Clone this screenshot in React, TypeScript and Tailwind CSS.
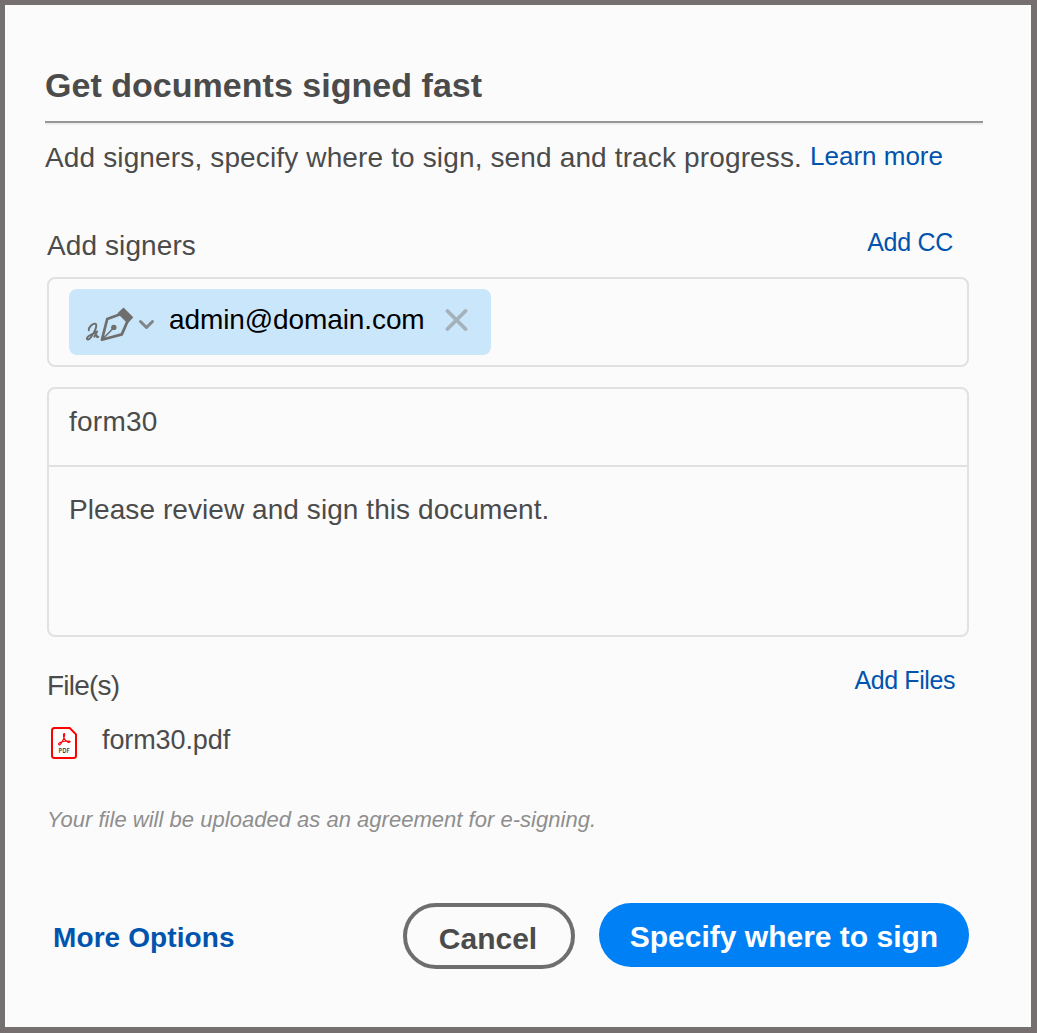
function PenIcon() {
  return (
    <svg className="ml-4 mt-1 h-9 w-12 shrink-0" viewBox="85 306 48 36" fill="none" stroke="#6e6e6e" strokeLinecap="round" strokeLinejoin="round">
      <path d="M123.5 307.6 133.4 317.4 127.6 323.6 117.4 313.2Z" fill="#6e6e6e" stroke="none" />
      <path d="M119.6 314.4 107.2 319 101.9 339.8 121.8 334.4 127 322.4" strokeWidth="2.7" />
      <path d="M102.5 339.2 113 328.4" strokeWidth="1.5" />
      <circle cx="113.8" cy="327.4" r="2.7" fill="#6e6e6e" stroke="none" />
      <path d="M88.8 330.2C88.2 327.4 92.6 323.4 95.2 323.6C98 324.4 95 331.6 91.2 337C89.2 339.8 86.6 340.4 86.9 338.2C87.4 335.8 92 334.6 97.2 331.4L94.4 336.8C95.8 334.8 97.4 334.6 96.8 336.2C96.6 337.4 97.4 337.4 98.4 336.8" strokeWidth="1.9" />
    </svg>
  );
}

function PdfIcon() {
  return (
    <svg className="h-8 w-[27px] shrink-0" viewBox="0 0 27 32" fill="none">
      <path d="M3.5 1H18.7L25 7.3V28.5Q25 31 22.5 31H3.5Q1 31 1 28.5V3.5Q1 1 3.5 1Z" fill="#fff" stroke="#f00" strokeWidth="2" />
      <path d="M7.6 17.2C6.7 15.8 12.3 14 17.8 14C20.4 14.3 18.5 16 16.5 14.9C13.5 13 12.2 10.2 12.5 7.3C12.8 6 13.9 6.4 13.7 8C13.2 11.4 10.4 16.6 8.8 17.7C8.2 18 7.7 17.7 7.6 17.2Z" stroke="#f00" strokeWidth="1.1" />
      <text x="7.6" y="26.2" fontSize="6.2" fontWeight="600" textLength="11" lengthAdjust="spacingAndGlyphs" fontFamily="Open Sans, sans-serif" fill="#333">PDF</text>
    </svg>
  );
}

export default function App() {
  return (
    <div className="h-[1033px] w-[1037px] border-5 border-r-6 border-b-6 border-[#766f6f] bg-[#fbfbfb] pt-[60px] pl-10 font-['Liberation_Sans',sans-serif] text-[28px] leading-10 whitespace-nowrap text-[#4b4b4b]">
      <h1 className="h-14 text-[34px] font-bold tracking-[0.03px]">Get documents signed fast</h1>
      <div className="h-1 w-[938px] border-t-2 border-b-2 border-t-[#979797] border-b-[#eeeeee]" />
      <div className="flex h-[100px] items-start pt-[13px]">
        <p className="tracking-[0.14px]">Add signers, specify where to sign, send and track progress.</p>
        <a className="ml-2 -mt-0.5 text-[26px] text-[#0054ae]">Learn more</a>
      </div>
      <div className="ml-0.5 w-[922px]">
        <div className="flex h-[52px] items-start justify-between pr-4">
          <span className="mt-px tracking-[0.1px]">Add signers</span>
          <a className="-mt-[3px] text-[25px] tracking-[-0.3px] text-[#0054ae]">Add CC</a>
        </div>
        <div className="flex h-[90px] items-start rounded-lg border-2 border-[#e1e1e1] pt-2.5 pl-5">
          <div className="flex h-[66px] w-[422px] items-center rounded-lg bg-[#cae6fb]">
            <PenIcon />
            <svg className="ml-1 mt-1 h-3 w-[18px] shrink-0" viewBox="0 0 18 12" fill="none" stroke="#808589" strokeWidth="3" strokeLinecap="round" strokeLinejoin="round"><path d="M3.5 3.5 9.5 9.5 15.5 3.5" /></svg>
            <span className="ml-3.5 -mt-1 tracking-[-0.1px] text-black">admin@domain.com</span>
            <svg className="ml-5 -mt-1 h-6 w-6 shrink-0" viewBox="0 0 24 24" stroke="#a4b0ba" strokeWidth="3.8" strokeLinecap="round"><path d="M2.5 3 20.5 21M20.5 3 2.5 21" /></svg>
          </div>
        </div>
        <div className="mt-5 h-[250px] rounded-lg border-2 border-[#e1e1e1]">
          <div className="h-[78px] border-b-2 border-[#e1e1e1] pt-[13px] pl-5 tracking-[0.25px]">form30</div>
          <div className="pt-[23px] pl-5 tracking-[0.07px]">Please review and sign this document.</div>
        </div>
        <div className="flex h-[90px] items-start justify-between pt-7 pr-3.5">
          <span className="mt-px tracking-[-0.8px]">File(s)</span>
          <a className="-mt-[5px] text-[25px] tracking-[-0.42px] text-[#0054ae]">Add Files</a>
        </div>
        <div className="ml-1 flex h-8 items-center">
          <PdfIcon />
          <span className="-mt-1.5 ml-6 text-[27px] tracking-[-0.1px]">form30.pdf</span>
        </div>
        <p className="mt-[41px] h-[103px] text-[22px] tracking-[0.02px] italic text-[#8e8e8e]">Your file will be uploaded as an agreement for e-signing.</p>
        <div className="flex items-start">
          <a className="mt-[15px] ml-1.5 w-[350px] text-[28px] font-bold tracking-[0.1px] text-[#0054ae]">More Options</a>
          <button className="h-[66px] w-[172px] rounded-[33px] border-4 border-[#6e6e6e] pt-1.5 pr-0.5 text-[30px] font-bold">Cancel</button>
          <button className="ml-6 h-16 w-[370px] rounded-[32px] bg-[#0080f5] pt-1 text-[30px] font-bold text-white">Specify where to sign</button>
        </div>
      </div>
    </div>
  );
}
